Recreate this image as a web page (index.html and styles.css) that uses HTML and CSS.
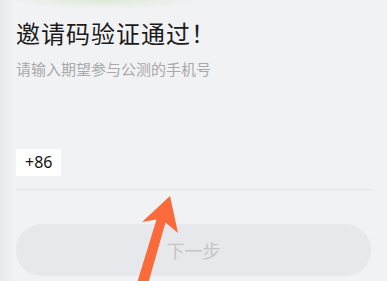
FILE: index.html
```html
<!DOCTYPE html>
<html lang="zh-CN">
  <head>
    <meta charset="UTF-8" />
    <meta name="viewport" content="width=device-width, initial-scale=1.0" />
    <title>邀请码验证通过</title>
    <link rel="stylesheet" href="styles.css">
  </head>
  <body>
    <div class="page">
      <h1 class="title">邀请码验证通过！</h1>
      <p class="subtitle">请输入期望参与公测的手机号</p>

      <div class="phone-row">
        <span class="area-code">+86</span>
        <input class="phone-input" type="tel" />
      </div>

      <button class="next-btn" disabled>下一步</button>
    </div>

    <!-- annotation arrow drawn over the page -->
    <svg class="arrow" width="387" height="281" viewBox="0 0 387 281">
      <polygon points="170,196 142,222 156.5,219.5 137,283 148,284 165.5,222.5 178,233" fill="#fa6a3b" />
    </svg>
  </body>
</html>
```

FILE: styles.css
```css
* {
  margin: 0;
  padding: 0;
  box-sizing: border-box;
}

html,
body {
  width: 387px;
  height: 281px;
  overflow: hidden;
}

body {
  font-family: "Noto Sans CJK SC", "Noto Sans", sans-serif;
  background:
    radial-gradient(ellipse 95px 9px at 105px 0px, rgba(215, 232, 205, 0.75), rgba(215, 232, 205, 0) 100%),
    linear-gradient(90deg, #e8e9eb 0px, #f1f2f4 14px);
  background-color: #f1f2f4;
  position: relative;
}

.page {
  padding: 18px 16px 0;
}

.title {
  font-size: 24px;
  line-height: 30px;
  font-weight: 400;
  letter-spacing: 1px;
  color: #1b1b1b;
}

.subtitle {
  margin-top: 11px;
  font-size: 15px;
  line-height: 20px;
  color: #a9a9ab;
}

.phone-row {
  margin-top: 70px;
  display: flex;
  align-items: center;
  padding-bottom: 13px;
  border-bottom: 1px solid #e2e3e6;
}

.area-code {
  background: #ffffff;
  height: 27px;
  line-height: 27px;
  padding: 0 9px;
  font-family: "Noto Sans", sans-serif;
  font-size: 16px;
  color: #111111;
}

.phone-input {
  flex: 1;
  border: none;
  background: transparent;
  outline: none;
}

.next-btn {
  margin-top: 34px;
  width: 100%;
  height: 52px;
  border: none;
  border-radius: 26px;
  background: #e7e8eb;
  color: #c4c5c8;
  font-family: "Noto Sans CJK SC", sans-serif;
  font-size: 18px;
}

.arrow {
  position: absolute;
  left: 0;
  top: 0;
  pointer-events: none;
}
```
